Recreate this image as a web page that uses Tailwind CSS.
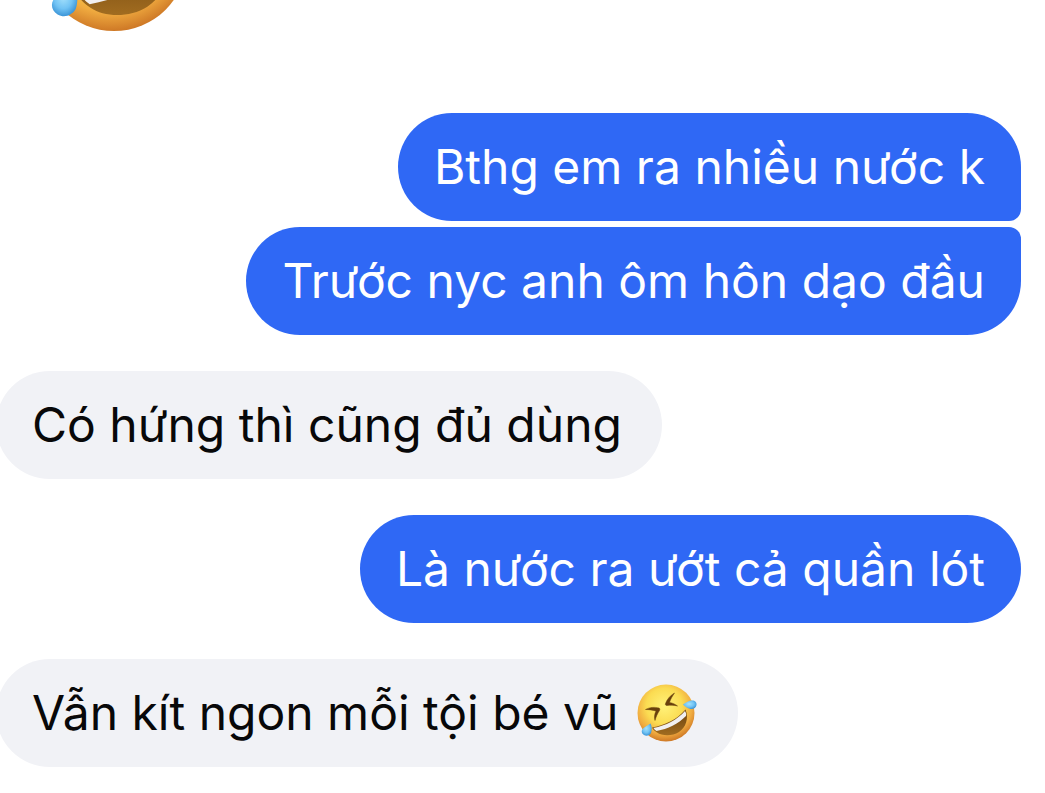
<!DOCTYPE html>
<html lang="vi">
<head>
    <meta charset="UTF-8">
    <meta name="viewport" content="width=device-width, initial-scale=1.0">
    <title>Chat</title>
    <script src="https://cdn.jsdelivr.net/npm/@tailwindcss/browser@4"></script>
</head>
<body class="bg-white overflow-hidden">
    <!-- Shared emoji artwork -->
    <svg class="absolute size-0" aria-hidden="true">
        <defs>
            <radialGradient id="face" cx="0.47" cy="0.38" r="0.63">
                <stop offset="0" stop-color="#fff27a"/>
                <stop offset="0.5" stop-color="#fbdc52"/>
                <stop offset="0.78" stop-color="#f0ab40"/>
                <stop offset="1" stop-color="#cc7524"/>
            </radialGradient>
            <linearGradient id="mouth" x1="0" y1="0" x2="0" y2="1">
                <stop offset="0" stop-color="#69400d"/>
                <stop offset="1" stop-color="#a16c20"/>
            </linearGradient>
            <radialGradient id="tear" cx="0.45" cy="0.4" r="0.6">
                <stop offset="0" stop-color="#a5e1fc"/>
                <stop offset="0.6" stop-color="#71c3f4"/>
                <stop offset="1" stop-color="#3d96d8"/>
            </radialGradient>
        </defs>
        <symbol id="rofl" viewBox="0 0 128 128">
            <circle cx="64" cy="64" r="57" fill="url(#face)"/>
            <path d="M36 93 C63 88 86 77 103 57 C110 74 104 93 90 102 C76 111 56 110 46 103 C41 100 38 97 36 93Z" fill="url(#mouth)"/>
            <path d="M39 94 C64 89 86 78 102 60 C104 63 105 67 104 70 C88 86 68 96 45 100 C42 98 41 97 39 94Z" fill="#f1eff0"/>
            <path d="M81 24 C72 29 66 37 63 45 C62 48 64 49 66 49 C73 48 80 48 87 50 C82 46 77 44 71 43 C73 36 77 30 81 24Z" fill="#69400d" stroke="#69400d" stroke-width="1" stroke-linejoin="round"/>
            <path d="M23 57 C32 52 42 52 50 54 C52 55 52 57 51 59 C47 65 44 71 42 79 C40 73 41 66 44 60 C37 58 30 57 23 57Z" fill="#69400d" stroke="#69400d" stroke-width="1" stroke-linejoin="round"/>
            <path d="M98 47 C104 43 110 39 116 39 C122 39 126 43 125 48 C124 54 119 57 113 56 C107 55 102 51 98 47Z" fill="url(#tear)"/>
            <path d="M33 85 C36 90 36 99 34 104 C31 109 25 111 20 108 C15 105 14 99 18 95 C22 91 28 89 33 85Z" fill="url(#tear)"/>
        </symbol>
    </svg>

    <main class="flex flex-col pr-6 font-[Inter,sans-serif] text-[48px] leading-[60px] whitespace-nowrap">
        <svg class="-mt-[124px] ml-8 size-[164px] shrink-0" role="img" aria-label="🤣"><use href="#rofl"/></svg>

        <!-- Sent -->
        <div class="mt-[73px] flex flex-col items-end gap-1.5 text-white">
            <p class="rounded-[54px] rounded-br-xl bg-[#2f68f5] px-9 py-6">Bthg em ra nhiều nước k</p>
            <p class="rounded-[54px] rounded-tr-xl bg-[#2f68f5] px-9 py-6">Trước nyc anh ôm hôn dạo đầu</p>
        </div>

        <!-- Received -->
        <div class="mt-9 -ml-1 flex text-[#080809]">
            <p class="rounded-[54px] bg-[#f1f2f6] py-6 pr-10 pl-9">Có hứng thì cũng đủ dùng</p>
        </div>

        <!-- Sent -->
        <div class="mt-9 flex justify-end text-white">
            <p class="rounded-[54px] bg-[#2f68f5] px-9 py-6">Là nước ra ướt cả quần lót</p>
        </div>

        <!-- Received -->
        <div class="mt-9 -ml-1 flex text-[#080809]">
            <p class="flex items-center gap-4 rounded-[54px] bg-[#f1f2f6] py-6 pr-10 pl-9">
                Vẫn kít ngon mỗi tội bé vũ
                <svg class="-my-1 size-16" role="img" aria-label="🤣"><use href="#rofl"/></svg>
            </p>
        </div>
    </main>
</body>
</html>
